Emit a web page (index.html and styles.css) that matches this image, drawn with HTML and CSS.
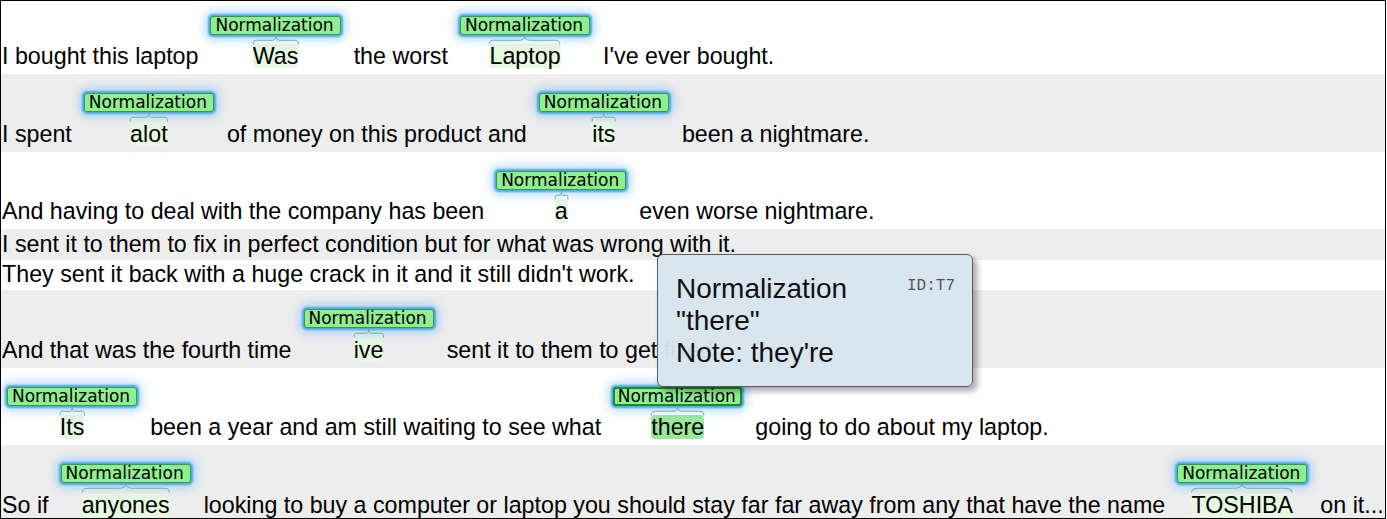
FILE: index.html
```html
<!DOCTYPE html>
<html>
<head>
<meta charset="utf-8">
<link rel="stylesheet" href="styles.css">
</head>
<body>
<div class="doc">
  <div class="row ann-row first">
    <span class="txt">I bought this laptop</span>
    <span class="ann"><span class="lbl">Normalization</span><span class="tok"><svg class="brace" viewBox="0 0 100 10" preserveAspectRatio="none"><path d="M0.5,10 C0.5,7 2,5.5 8,5.5 L42,5.5 C47,5.5 50,4 50,1 C50,4 53,5.5 58,5.5 L92,5.5 C98,5.5 99.5,7 99.5,10"/></svg><span class="word">Was</span></span></span>
    <span class="txt">the worst</span>
    <span class="ann"><span class="lbl">Normalization</span><span class="tok"><svg class="brace" viewBox="0 0 100 10" preserveAspectRatio="none"><path d="M0.5,10 C0.5,7 2,5.5 8,5.5 L42,5.5 C47,5.5 50,4 50,1 C50,4 53,5.5 58,5.5 L92,5.5 C98,5.5 99.5,7 99.5,10"/></svg><span class="word">Laptop</span></span></span>
    <span class="txt">I've ever bought.</span>
  </div>
  <div class="row ann-row">
    <span class="txt">I spent</span>
    <span class="ann"><span class="lbl">Normalization</span><span class="tok"><svg class="brace" viewBox="0 0 100 10" preserveAspectRatio="none"><path d="M0.5,10 C0.5,7 2,5.5 8,5.5 L42,5.5 C47,5.5 50,4 50,1 C50,4 53,5.5 58,5.5 L92,5.5 C98,5.5 99.5,7 99.5,10"/></svg><span class="word">alot</span></span></span>
    <span class="txt">of money on this product and</span>
    <span class="ann"><span class="lbl">Normalization</span><span class="tok"><svg class="brace" viewBox="0 0 100 10" preserveAspectRatio="none"><path d="M0.5,10 C0.5,7 2,5.5 8,5.5 L42,5.5 C47,5.5 50,4 50,1 C50,4 53,5.5 58,5.5 L92,5.5 C98,5.5 99.5,7 99.5,10"/></svg><span class="word">its</span></span></span>
    <span class="txt">been a nightmare.</span>
  </div>
  <div class="row ann-row">
    <span class="txt">And having to deal with the company has been</span>
    <span class="ann"><span class="lbl">Normalization</span><span class="tok"><svg class="brace" viewBox="0 0 100 10" preserveAspectRatio="none"><path d="M0.5,10 C0.5,7 2,5.5 8,5.5 L42,5.5 C47,5.5 50,4 50,1 C50,4 53,5.5 58,5.5 L92,5.5 C98,5.5 99.5,7 99.5,10"/></svg><span class="word">a</span></span></span>
    <span class="txt">even worse nightmare.</span>
  </div>
  <div class="row plain-row">
    <span class="txt">I sent it to them to fix in perfect condition but for what was wrong with it.</span>
  </div>
  <div class="row plain-row">
    <span class="txt">They sent it back with a huge crack in it and it still didn't work.</span>
  </div>
  <div class="row ann-row">
    <span class="txt">And that was the fourth time</span>
    <span class="ann"><span class="lbl">Normalization</span><span class="tok"><svg class="brace" viewBox="0 0 100 10" preserveAspectRatio="none"><path d="M0.5,10 C0.5,7 2,5.5 8,5.5 L42,5.5 C47,5.5 50,4 50,1 C50,4 53,5.5 58,5.5 L92,5.5 C98,5.5 99.5,7 99.5,10"/></svg><span class="word">ive</span></span></span>
    <span class="txt">sent it to them to get fixed.</span>
  </div>
  <div class="row ann-row">
    <span class="ann"><span class="lbl">Normalization</span><span class="tok"><svg class="brace" viewBox="0 0 100 10" preserveAspectRatio="none"><path d="M0.5,10 C0.5,7 2,5.5 8,5.5 L42,5.5 C47,5.5 50,4 50,1 C50,4 53,5.5 58,5.5 L92,5.5 C98,5.5 99.5,7 99.5,10"/></svg><span class="word">Its</span></span></span>
    <span class="txt">been a year and am still waiting to see what</span>
    <span class="ann active"><span class="lbl">Normalization</span><span class="tok"><svg class="brace" viewBox="0 0 100 10" preserveAspectRatio="none"><path d="M0.5,10 C0.5,7 2,5.5 8,5.5 L42,5.5 C47,5.5 50,4 50,1 C50,4 53,5.5 58,5.5 L92,5.5 C98,5.5 99.5,7 99.5,10"/></svg><span class="word">there</span></span></span>
    <span class="txt">going to do about my laptop.</span>
  </div>
  <div class="row ann-row last">
    <span class="txt">So if</span>
    <span class="ann"><span class="lbl">Normalization</span><span class="tok"><svg class="brace" viewBox="0 0 100 10" preserveAspectRatio="none"><path d="M0.5,10 C0.5,7 2,5.5 8,5.5 L42,5.5 C47,5.5 50,4 50,1 C50,4 53,5.5 58,5.5 L92,5.5 C98,5.5 99.5,7 99.5,10"/></svg><span class="word">anyones</span></span></span>
    <span class="txt">looking to buy a computer or laptop you should stay far far away from any that have the name</span>
    <span class="ann"><span class="lbl">Normalization</span><span class="tok"><svg class="brace" viewBox="0 0 100 10" preserveAspectRatio="none"><path d="M0.5,10 C0.5,7 2,5.5 8,5.5 L42,5.5 C47,5.5 50,4 50,1 C50,4 53,5.5 58,5.5 L92,5.5 C98,5.5 99.5,7 99.5,10"/></svg><span class="word">TOSHIBA</span></span></span>
    <span class="txt">on it...</span>
  </div>

  <div class="tooltip">
    <span class="tip-id">ID:T7</span>
    <div class="tip-line">Normalization</div>
    <div class="tip-line">"there"</div>
    <div class="tip-line">Note: they're</div>
  </div>
</div>
</body>
</html>
```

FILE: styles.css
```css
html, body {
  margin: 0;
  padding: 0;
  background: #fff;
}

.doc {
  position: relative;
  box-sizing: border-box;
  width: 1386px;
  height: 519px;
  border: 1px solid #000;
  overflow: hidden;
  font-family: "Liberation Sans", Arial, sans-serif;
  font-size: 23.25px;
  color: #000;
}

.row {
  display: flex;
  align-items: flex-end;
  gap: 12px;
  padding-left: 1px;
  white-space: nowrap;
  background: #fff;
}

.row:nth-child(even) {
  background: #ededed;
}

.ann-row {
  height: 77.5px;
  box-sizing: border-box;
  padding-bottom: 6px;
}

.ann-row.first {
  height: 73px;
}

.plain-row {
  height: 30.5px;
  box-sizing: border-box;
  padding-bottom: 4px;
}

.txt {
  display: block;
  line-height: 24px;
}

.ann {
  display: flex;
  flex-direction: column;
  align-items: center;
  margin-right: 1px;
}

.ann:first-child {
  margin-left: 5px;
}

.lbl {
  display: block;
  font-family: "DejaVu Sans", Verdana, sans-serif;
  font-size: 17px;
  line-height: 17px;
  padding: 0 6px 0 4px;
  background: #8fee8f;
  border: 1px solid #3d9b3d;
  border-radius: 3px;
  box-shadow: 0 0 2px 2px #4aa8f3, 0 0 10px 5px rgba(110, 185, 250, 0.5);
  position: relative;
  z-index: 1;
}

.ann.active .lbl {
  border: 2.5px solid #1f8c1f;
  line-height: 15px;
  padding: 0 4.5px 0 2.5px;
}

.tok {
  display: flex;
  flex-direction: column;
  align-items: stretch;
}

.brace {
  display: block;
  width: 0;
  min-width: 100%;
  height: 9.5px;
  overflow: visible;
}

.brace path {
  fill: none;
  stroke: #72ae72;
  stroke-width: 1;
  vector-effect: non-scaling-stroke;
}

.word {
  display: block;
  line-height: 24px;
  background: #e6f8e0;
  border-radius: 4px;
}

.ann.active .word {
  background: #9ae99a;
}

.tooltip {
  position: absolute;
  left: 656px;
  top: 253px;
  box-sizing: border-box;
  width: 316px;
  height: 133px;
  padding: 18px 18px 10px;
  background: rgba(216, 229, 238, 0.96);
  border: 1px solid #555b60;
  border-radius: 6px;
  box-shadow: 4px 4px 6px rgba(0, 0, 0, 0.35);
  z-index: 5;
  font-family: "Liberation Sans", Arial, sans-serif;
  font-size: 28px;
  line-height: 32px;
  color: #111;
}

.tip-id {
  float: right;
  font-family: "Liberation Mono", "Courier New", monospace;
  font-size: 16px;
  line-height: 26px;
  color: #555;
  margin-right: -1px;
}

.tip-line {
  white-space: nowrap;
}
```
